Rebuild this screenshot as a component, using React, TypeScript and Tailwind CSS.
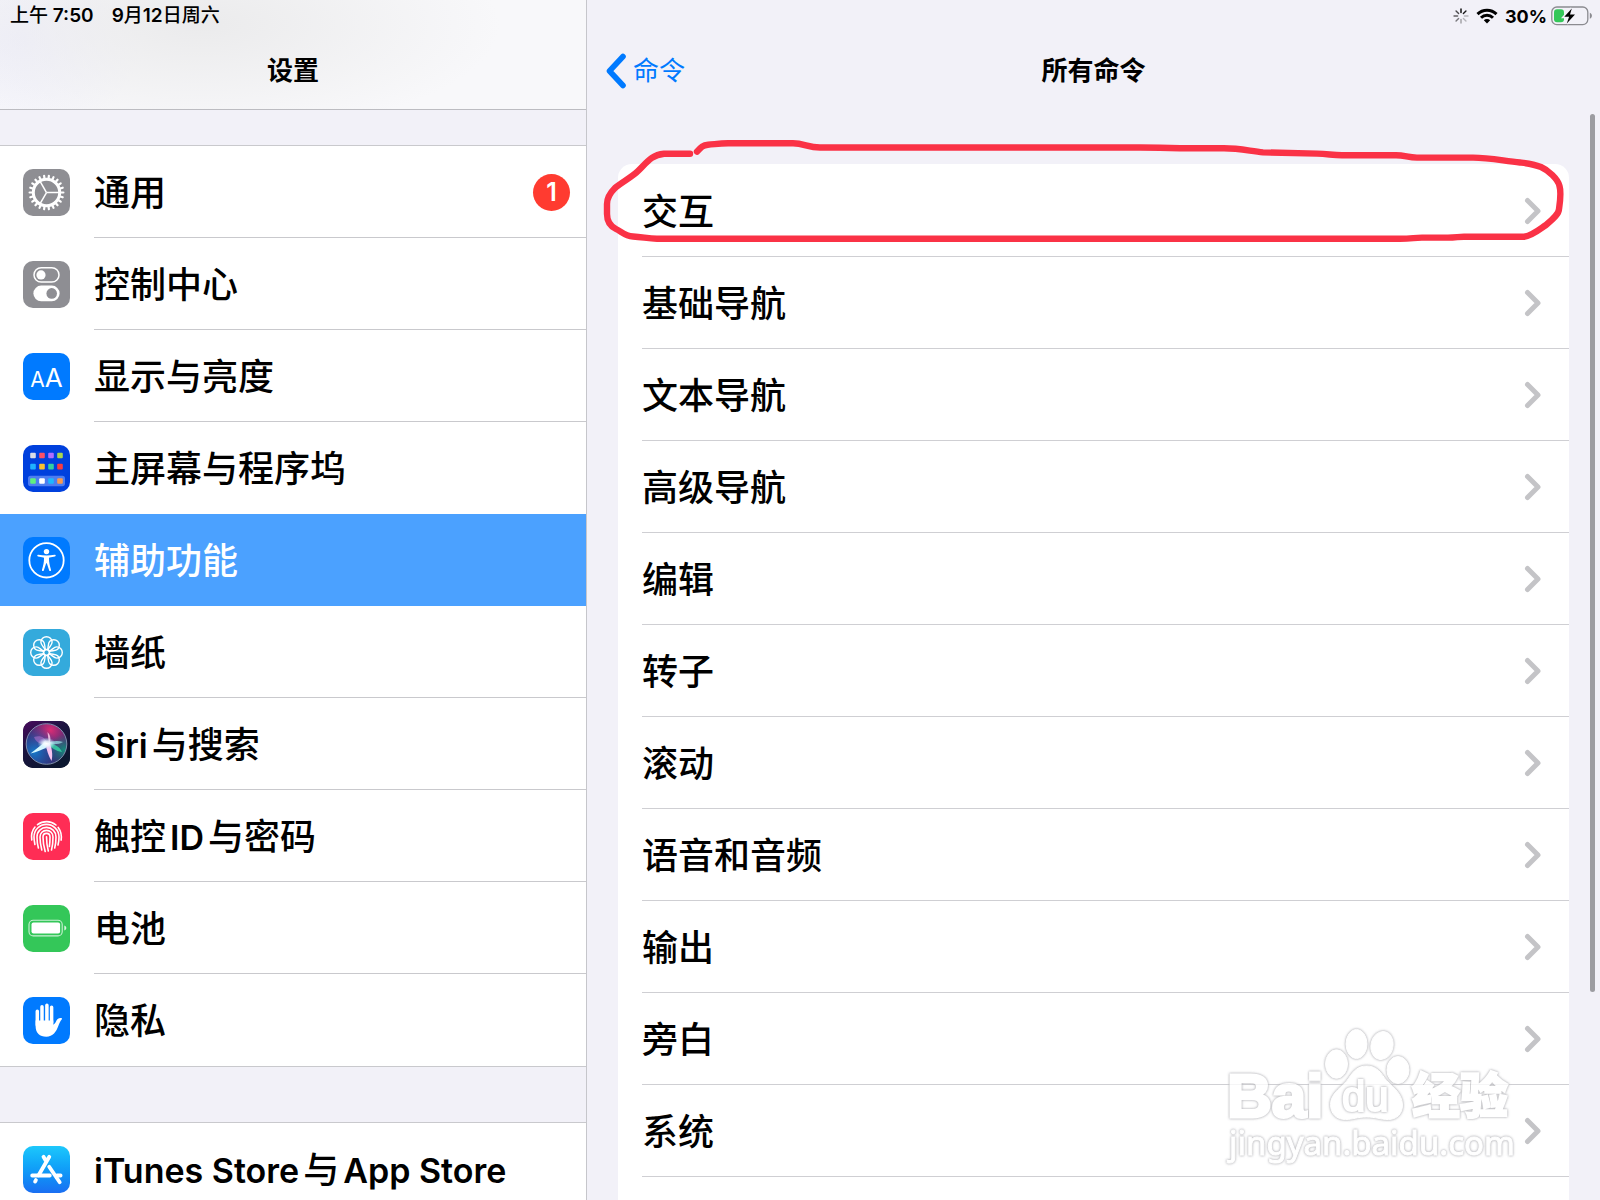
import React from "react";

const FONT = "font-['Inter','Noto_Sans_CJK_SC',sans-serif]";

function GearIcon() {
  const teeth = Array.from({ length: 22 }, (_, i) => (i * 360) / 22);
  return (
    <svg viewBox="0 0 47 47" className="size-full" stroke="#fff" fill="none">
      <circle cx="23.5" cy="23.5" r="13.2" strokeWidth="3" />
      {teeth.map((a) => (
        <line key={a} x1="37" y1="23.5" x2="40.4" y2="23.5" strokeWidth="2.2" strokeLinecap="round" transform={`rotate(${a} 23.5 23.5)`} />
      ))}
      {[0, 120, 240].map((a) => (
        <line key={a} x1="23.5" y1="23.5" x2="36" y2="23.5" strokeWidth="1.5" transform={`rotate(${a} 23.5 23.5)`} />
      ))}
    </svg>
  );
}

function TogglesIcon() {
  return (
    <svg viewBox="0 0 47 47" className="size-full">
      <rect x="11" y="6.7" width="25" height="14.4" rx="7.2" fill="none" stroke="#fff" strokeWidth="1.5" />
      <circle cx="18" cy="13.9" r="4.6" fill="#fff" />
      <rect x="10.4" y="24.6" width="26.2" height="15.6" rx="7.8" fill="#fff" />
      <circle cx="28.7" cy="32.4" r="5.3" fill="#8e8e93" />
    </svg>
  );
}

function TextSizeIcon() {
  return (
    <span aria-hidden="true" className="flex size-full items-baseline justify-center pt-[9px] font-normal leading-[32px] text-white">
      <span className="text-[21px]">A</span>
      <span className="text-[26px]">A</span>
    </span>
  );
}

function HomeGridIcon() {
  const rows = [
    { y: 7.7, colors: ["#d9dce6", "#fb5068", "#b06cff", "#a9d64e"] },
    { y: 18.8, colors: ["#1fb2ff", "#f8c32f", "#33d0a0", "#fb3b40"] },
    { y: 33.2, colors: ["#5ff07e", "#ffffff", "#1db8ff", "#fb9a4c"] },
  ];
  return (
    <svg viewBox="0 0 47 47" className="size-full">
      <rect x="5" y="30.8" width="37" height="10.4" rx="2.6" fill="#4d7df0" />
      {rows.map((r) =>
        r.colors.map((c, i) => <rect key={c} x={7.2 + i * 9} y={r.y} width="5.6" height="5.6" rx="1" fill={c} />)
      )}
    </svg>
  );
}

function AccessibilityIcon() {
  return (
    <svg viewBox="0 0 47 47" className="size-full" fill="#fff">
      <circle cx="23.5" cy="23.3" r="17.2" fill="none" stroke="#fff" strokeWidth="1.8" />
      <circle cx="23.5" cy="14.6" r="2.7" />
      <path d="M15.200 17.700c-1.100-.2-1.300 1.400-.2 1.700l5.400 1.200c.5.100.6.400.6.900 0 3.800-.6 6.600-2 11.300-.4 1.300 1.300 1.800 1.800.6l2.300-6.800c.2-.5.600-.5.800 0l2.300 6.800c.5 1.200 2.200.7 1.800-.6-1.400-4.700-2-7.500-2-11.300 0-.5.100-.8.600-.9l5.400-1.200c1.100-.3.900-1.900-.2-1.700-5.600 1-11 1-16.600 0z" />
    </svg>
  );
}

function FlowerIcon() {
  return (
    <svg viewBox="0 0 47 47" className="size-full" fill="none" stroke="#fff" strokeWidth="1.4">
      {Array.from({ length: 8 }, (_, i) => i * 45).map((a) => (
        <path
          key={a}
          d="M23.500 7.700a5.600 5.600 0 0 1 5.600 5.600c0 2.600-2.600 4.300-4.300 7.300h-2.600c-1.700-3-4.300-4.700-4.300-7.300a5.600 5.600 0 0 1 5.600-5.600z"
          transform={`rotate(${a} 23.5 23.5)`}
        />
      ))}
      <circle cx="23.5" cy="23.5" r="3" />
    </svg>
  );
}

function SiriIcon() {
  return (
    <svg viewBox="0 0 47 47" className="size-full">
      <defs>
        <linearGradient id="siriBg" x1="0" y1="0" x2=".6" y2="1">
          <stop offset="0" stopColor="#4b0a5e" />
          <stop offset=".45" stopColor="#1c1440" />
          <stop offset="1" stopColor="#0c1730" />
        </linearGradient>
        <radialGradient id="siriPink" cx=".6" cy=".15" r=".6">
          <stop offset="0" stopColor="#dc2c74" />
          <stop offset="1" stopColor="#b02a8a" stopOpacity="0" />
        </radialGradient>
        <radialGradient id="siriBlue" cx=".2" cy=".7" r=".65">
          <stop offset="0" stopColor="#1579c8" />
          <stop offset="1" stopColor="#1b4fb0" stopOpacity="0" />
        </radialGradient>
        <radialGradient id="siriGreen" cx=".95" cy=".65" r=".4">
          <stop offset="0" stopColor="#178c7c" />
          <stop offset="1" stopColor="#137a80" stopOpacity="0" />
        </radialGradient>
        <radialGradient id="siriGlow">
          <stop offset="0" stopColor="#fff" />
          <stop offset=".4" stopColor="#eefaff" stopOpacity=".85" />
          <stop offset="1" stopColor="#b6e6ff" stopOpacity="0" />
        </radialGradient>
      </defs>
      <rect width="47" height="47" fill="url(#siriBg)" />
      <circle cx="23.5" cy="23" r="20" fill="#3a2c6c" />
      <circle cx="23.5" cy="23" r="20" fill="url(#siriPink)" />
      <circle cx="23.5" cy="23" r="20" fill="url(#siriBlue)" />
      <circle cx="23.5" cy="23" r="20" fill="url(#siriGreen)" />
      <path d="M11 16c6-2 12 0 13 7-5 1-11-1-13-7z" fill="#c07ad8" opacity=".5" />
      <path d="M24 22c4-2 11-3 16-1-4 2.500-11 3-16 1z" fill="#8fd4dc" opacity=".8" />
      <path d="M24 22c7 0 13 4 15 9-6-1-11-4-15-9z" fill="#35e0a8" opacity=".75" />
      <path d="M26 23 24.500 11c3 3 4 8 1.500 12z" fill="#ffd3ee" opacity=".8" />
      <path d="M22 21 7.500 32.500c6-1.500 13-4 18-7.500z" fill="#d4f8ff" />
      <path d="M22.500 22c1 7 3 13 6 18 1.500-6 .5-13-2-18z" fill="#f9c4f0" />
      <ellipse cx="23.500" cy="22.500" rx="9" ry="6" fill="url(#siriGlow)" />
      <circle cx="23.5" cy="23" r="20.300" fill="none" stroke="#9fb6cf" strokeOpacity=".75" strokeWidth="1" />
    </svg>
  );
}

function TouchIdIcon() {
  return (
    <svg viewBox="0 0 47 47" className="size-full" fill="none" stroke="#fff" strokeWidth="1.600" strokeLinecap="round">
      <path d="M14.500 11.700C20 7.500 27.500 7.500 33 12" />
      <path d="M8.800 27c-.8-5 .2-9.500 3.200-13" />
      <path d="M35.200 14.400c3 4 3.600 8.500 2.900 12.800" />
      <path d="M11.900 31.500c-.5-2.500-.9-4.500-.9-7.500 0-7.200 5.600-12.600 12.500-12.600S36 17 36 24c0 3-.3 5.500-1 8" />
      <path d="M15.400 35c-1-3.600-1.400-7-1.400-11 0-5.600 4.300-9.600 9.500-9.600S33 18.500 33 24c0 4-.4 7.600-1.300 11" />
      <path d="M18.800 37c-1.200-4.500-1.800-8.700-1.800-13 0-3.900 2.900-6.600 6.500-6.600S30 20.200 30 24c0 4.500-.4 8.800-1.500 13" />
      <path d="M22.200 38.400C20.700 33.500 20 29 20 24c0-2.200 1.500-3.600 3.500-3.600S27 21.900 27 24c0 3.500-.1 6.500-.6 9.500" />
      <path d="M23.500 23.800c0 5 .6 9.500 1.800 14.200" />
    </svg>
  );
}

function BatteryTileIcon() {
  return (
    <svg viewBox="0 0 47 47" className="size-full">
      <rect x="6" y="15.300" width="33.200" height="15.600" rx="4.200" fill="none" stroke="#fff" strokeOpacity=".75" strokeWidth="1.100" />
      <rect x="8.500" y="17.600" width="28.600" height="11" rx="2" fill="#fff" />
      <path d="M41.300 20.600c1.400.4 2 1.400 2 2.500s-.6 2.100-2 2.500z" fill="#fff" fillOpacity=".8" />
    </svg>
  );
}

function HandIcon() {
  return (
    <svg viewBox="0 0 47 47" className="size-full" stroke="#fff" strokeWidth="3.500" strokeLinecap="round" fill="#fff">
      <path d="M14.300 14.200V28M19 9.700V26M23.900 8.300V26M28.600 10.300V26" fill="none" />
      <path d="M12.600 23.500h17.700v4.300c1.200-.6 2.300-2.200 3.200-4.200.9-1.900 2.600-2.900 4.800-2.500.8.200.9.800.4 1.300-1.500 1.500-2.200 3.500-3.200 6.100-2.300 6.400-5.500 11.200-12.200 11.200-6.600 0-10.700-4-10.700-10.500z" stroke="none" />
    </svg>
  );
}

function AppStoreIcon() {
  return (
    <svg viewBox="0 0 47 47" className="size-full" stroke="#fff" strokeWidth="3.800" strokeLinecap="round" fill="none">
      <path d="M26.300 10.800 15.600 29.300M20.500 10.800l2.600 4.500M26.200 20.700l10.500 15.500M12.900 34.100l-.8 1.500" />
      <path d="M9.200 29.500h17.600M34 29.500h3.600" />
    </svg>
  );
}

type NavItem = { label: string; tile: string; Icon: () => React.JSX.Element; badge?: number; active?: boolean };

const MAIN_ITEMS: NavItem[] = [
  { label: "通用", tile: "bg-[#8e8e93]", Icon: GearIcon, badge: 1 },
  { label: "控制中心", tile: "bg-[#8e8e93]", Icon: TogglesIcon },
  { label: "显示与亮度", tile: "bg-[#007aff]", Icon: TextSizeIcon },
  { label: "主屏幕与程序坞", tile: "bg-[#0040dd]", Icon: HomeGridIcon },
  { label: "辅助功能", tile: "bg-[#007aff]", Icon: AccessibilityIcon, active: true },
  { label: "墙纸", tile: "bg-[#34aadc]", Icon: FlowerIcon },
  { label: "Siri与搜索", tile: "bg-[#14142e]", Icon: SiriIcon },
  { label: "触控ID与密码", tile: "bg-[#ff2d55]", Icon: TouchIdIcon },
  { label: "电池", tile: "bg-[#34c759]", Icon: BatteryTileIcon },
  { label: "隐私", tile: "bg-[#007aff]", Icon: HandIcon },
];

const STORE_ITEMS: NavItem[] = [
  { label: "iTunes Store与App Store", tile: "bg-linear-to-b from-[#1ec8fb] to-[#1a6ef2]", Icon: AppStoreIcon },
];

const COMMANDS = ["交互", "基础导航", "文本导航", "高级导航", "编辑", "转子", "滚动", "语音和音频", "输出", "旁白", "系统"];

/** Sets Latin runs slightly smaller and heavier than the Chinese text around them. */
function MixedText({ text }: { text: string }) {
  const runs = text.split(/([A-Za-z][A-Za-z ]*)/).filter(Boolean);
  return (
    <span>
      {runs.map((run) => (
        <span key={run} className={/[A-Za-z]/.test(run) ? "mx-1 text-[34px] font-semibold first:ml-0" : ""}>
          {run}
        </span>
      ))}
    </span>
  );
}

function NavGroup({ items }: { items: NavItem[] }) {
  return (
    <ul className="border-y border-[#c9c9cd] bg-white">
      {items.map(({ label, tile, Icon, badge, active }, i) => (
        <li key={label}>
          <a
            href="#"
            aria-current={active ? "page" : undefined}
            className={`flex h-[92px] items-center gap-6 pl-[23px] ${active ? "bg-[#4ba1ff] text-white" : "text-black"}`}
          >
            <span className={`size-[47px] shrink-0 overflow-hidden rounded-[10px] ${tile}`}>
              <Icon />
            </span>
            <span
              className={`flex h-full flex-1 items-center justify-between whitespace-nowrap pt-[2px] pr-4 text-[36px] font-medium ${
                i < items.length - 1 && !active && !items[i + 1].active ? "border-b border-[#c9c9cd]" : ""
              }`}
            >
              <MixedText text={label} />
              {badge && (
                <span className="flex size-[37px] items-center justify-center rounded-full bg-[#ff3b30] text-[25px] font-semibold text-white">{badge}</span>
              )}
            </span>
          </a>
        </li>
      ))}
    </ul>
  );
}

function StatusIcons() {
  return (
    <div className="flex h-8 items-center justify-end pr-[7px]">
      <svg viewBox="0 0 16 16" className="size-4" stroke="#000" strokeWidth="1.400" strokeLinecap="round">
        {[1, 0.9, 0.25, 0.25, 0.35, 0.5, 0.6, 0.7].map((o, i) => (
          <line key={i} x1="8" y1="1" x2="8" y2="4.600" strokeOpacity={o} transform={`rotate(${i * 45} 8 8)`} />
        ))}
      </svg>
      <svg viewBox="0 0 22 16" className="ml-[7px] h-4 w-[22px]" fill="none" stroke="#000" strokeWidth="3">
        <path d="M1.500 6.100a13.400 13.400 0 0 1 19 0" />
        <path d="M5 9.700a8.500 8.500 0 0 1 12 0" />
        <path d="M11 15.600 7.800 12.200a4.600 4.600 0 0 1 6.400 0z" fill="#000" stroke="none" />
      </svg>
      <span className="ml-[7px] text-[18px] font-bold">30%</span>
      <svg viewBox="0 0 42 20" className="ml-1 h-5 w-[42px]">
        <rect x=".8" y="1" width="36" height="17.600" rx="5" fill="none" stroke="#8b8b90" strokeWidth="1.300" />
        <rect x="3" y="3.300" width="10" height="13" rx="3" fill="#34c759" />
        <path d="M38.800 6.800c1.400.6 2.100 1.700 2.100 3s-.7 2.400-2.100 3z" fill="#8b8b90" />
        <path d="M20.800 2.500 13.300 10.800h4.800l-2.300 6.600 8.200-8.900h-5z" fill="#000" stroke="#f2f1f8" strokeWidth="3" paintOrder="stroke" />
      </svg>
    </div>
  );
}

function RedCircle() {
  return (
    <svg
      aria-hidden="true"
      viewBox="600 135 970 115"
      className="pointer-events-none absolute -top-[30px] -left-[18px] h-[115px] w-[970px]"
      fill="none"
      stroke="#fa3246"
      strokeWidth="6.400"
      strokeLinecap="round"
      strokeLinejoin="round"
    >
      <path
        d="M690 154.700H664C652 156 648 162 638 172 632 178 622 183 615 189 609 195 607 199 607 205V215C607 222 610 227 616 230
          C622 233 625 237 633 237.500C643 238 648 239.700 657 239.700H1400C1412 239.700 1414 238.600 1422 238.600H1448C1456 238.600 1458 237.700 1464 237.700H1524
          C1532 237 1540 230 1546 226C1553 220 1559 215 1559 210C1560 203 1561.500 194 1559.500 187C1558 180 1548 171 1541 168
          C1533 165 1528 164.500 1520 163.500C1504 162 1490 158.600 1473 158.600H1417C1408 158.600 1405 156.300 1396 156.300H1342
          C1332 156.300 1328 154.800 1317 154.600L1263 153.400C1251 152.400 1240 149.300 1224 149.300H1180C1160 148.500 1150 148.500 1140 148.500H820
          C808 148.500 804 144.300 793 144.300H728C718 144.600 714 145.400 708 145.700C703 146 701 148 697 152.600"
      />
    </svg>
  );
}

function Watermark() {
  const halo = "[filter:drop-shadow(0_0_1px_#a4a4a8)_drop-shadow(0_0_1px_#d4d4d8)]";
  return (
    <svg
      aria-hidden="true"
      viewBox="1220 1020 300 150"
      className="pointer-events-none absolute right-[80px] bottom-[30px] h-[150px] w-[300px] opacity-80"
      fill="#fff"
      stroke="#fff"
      strokeWidth="1"
    >
      <g className={halo}>
        <ellipse cx="1336.500" cy="1064" rx="11" ry="14.300" />
        <ellipse cx="1356.500" cy="1044" rx="10.500" ry="14.600" />
        <ellipse cx="1382" cy="1045.500" rx="11" ry="14" transform="rotate(12 1382 1045.500)" />
        <ellipse cx="1398" cy="1070" rx="11" ry="13.500" />
        <path d="M1366.500 1066c8 0 13 4 18 12 5 7 18 14 18 27 0 9-6 14.500-14 14.500-9 0-12-2.500-22-2.500s-13 2.500-21 2.500c-9 0-15-6-15-15 0-12 13-18 18-26 5-8 10-12.500 18-12.500z" />
      </g>
      <text x="1227" y="1117" strokeWidth="3" className={`font-['Liberation_Sans',sans-serif] text-[62px] font-bold ${halo}`}>Bai</text>
      <text x="1342" y="1111" className={`font-['Liberation_Sans',sans-serif] text-[42px] ${halo}`} strokeWidth="2">du</text>
      <text x="1412" y="1113" className={`font-['Noto_Sans_CJK_SC',sans-serif] text-[48px] font-black ${halo}`} strokeWidth="2">经验</text>
      <text x="1229" y="1155" className={`font-['Noto_Sans',sans-serif] text-[33px] ${halo}`}>jingyan.baidu.com</text>
    </svg>
  );
}

export default function App() {
  return (
    <div className={`grid h-screen grid-cols-[587fr_1013fr] overflow-hidden bg-[#f2f1f8] text-black ${FONT}`}>
      <aside className="flex min-w-0 flex-col overflow-hidden border-r border-[#c6c6cb]">
        <header className="h-[110px] shrink-0 border-b border-[#bcbcc1] bg-[#f8f8fa] bg-[radial-gradient(ellipse_300px_110px_at_200px_25px,#ebebec,transparent),radial-gradient(ellipse_120px_100px_at_20px_40px,#efeffb,transparent)]">
          <div className="flex h-8 items-center gap-[18px] pl-[10px] text-[19px] font-semibold">
            <span>
              <span className="font-medium">上午</span> 7:50
            </span>
            <span className="font-medium">
              <span className="font-semibold">9</span>月<span className="font-semibold">12</span>日周六
            </span>
          </div>
          <h1 className="flex h-[77px] items-center justify-center text-[26px] font-semibold">设置</h1>
        </header>
        <nav aria-label="设置" className="flex flex-col gap-[55px] pt-[35px]">
          <NavGroup items={MAIN_ITEMS} />
          <NavGroup items={STORE_ITEMS} />
        </nav>
      </aside>
      <main className="relative flex min-w-0 flex-col">
        <StatusIcons />
        <div className="grid h-[77px] grid-cols-3 items-center">
          <button type="button" className="flex items-center gap-[6px] pl-[18px] text-[26px] text-[#007aff]">
            <svg viewBox="0 0 22 36" className="h-9 w-[22px]" fill="none" stroke="currentColor" strokeWidth="5.600" strokeLinecap="round" strokeLinejoin="round">
              <path d="M18 3.500 4.500 18 18 32.500" />
            </svg>
            命令
          </button>
          <h2 className="text-center text-[26px] font-semibold">所有命令</h2>
        </div>
        <section className="relative mx-[31px] mt-[55px] flex-1 rounded-t-[14px] bg-white">
          <ul className="pt-px">
            {COMMANDS.map((label) => (
              <li key={label} className="pl-6">
                <a href="#" className="flex h-[92px] items-center justify-between border-b border-[#cfcfd3] pr-[27px] text-[36px] font-medium">
                  <span className="pt-[2px]">{label}</span>
                  <svg viewBox="0 0 18 28" className="h-7 w-[18px]" fill="none" stroke="#c4c4c7" strokeWidth="5" strokeLinecap="round" strokeLinejoin="round">
                    <path d="M3.500 3.500 14 14 3.500 24.500" />
                  </svg>
                </a>
              </li>
            ))}
          </ul>
          <RedCircle />
        </section>
        <div className="absolute top-[114px] right-[5px] h-[878px] w-[5px] rounded-full bg-[#9c9ca1]" />
        <Watermark />
      </main>
    </div>
  );
}
